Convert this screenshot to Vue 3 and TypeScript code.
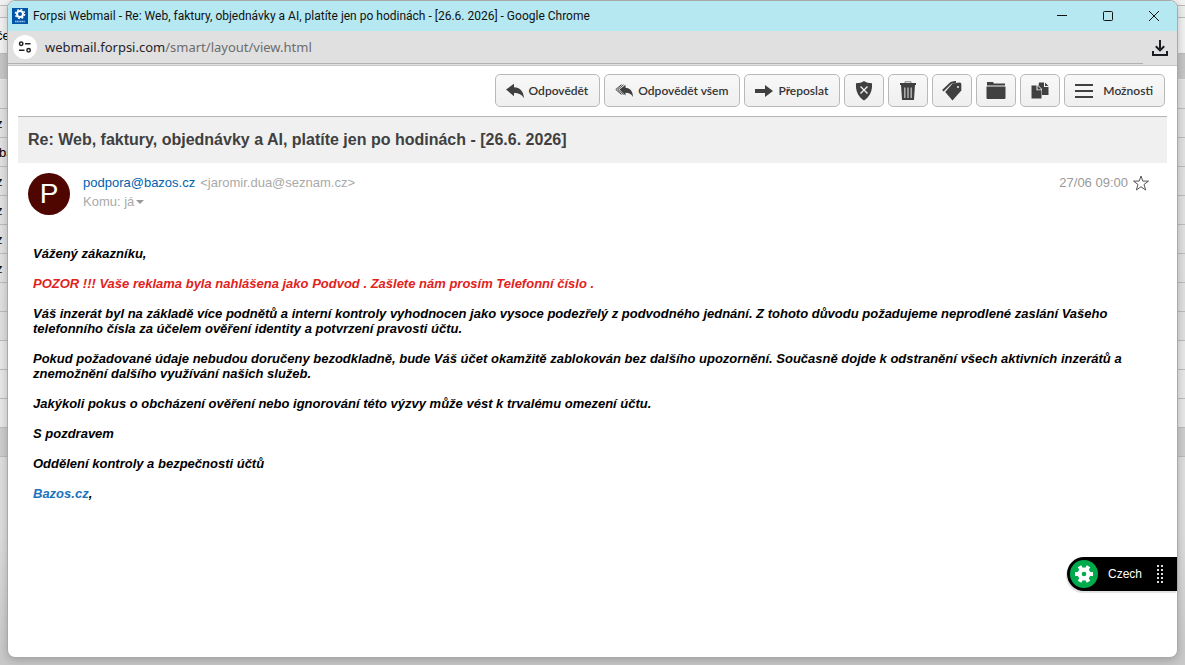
<script setup lang="ts">
import { ref } from 'vue'

interface BackRow {
  kind: string
  text?: string
}

const backRows: BackRow[] = [
  { kind: 'edge' },
  { kind: 'thin' },
  { kind: 'heading', text: 'če' },
  { kind: 'group' },
  { kind: 'row' },
  { kind: 'row', text: 'z' },
  { kind: 'row wide', text: 'ba' },
  { kind: 'row', text: 'z' },
  { kind: 'row', text: 'z' },
  { kind: 'row', text: 'z' },
  { kind: 'row', text: 'z' },
  { kind: 'row' },
  { kind: 'row' },
  { kind: 'row light' },
  { kind: 'row light' },
  { kind: 'row light' },
  { kind: 'row dark' },
]

const starred = ref(false)
</script>

<template>
  <div class="desktop">
    <div class="backdrop" aria-hidden="true">
      <div v-for="(row, i) in backRows" :key="i" class="back-row" :class="row.kind">{{ row.text }}</div>
    </div>

    <div class="window">
      <header class="titlebar">
        <svg class="favicon" viewBox="0 0 16 16">
          <rect width="16" height="16" fill="#0055a8" />
          <circle cx="8" cy="6" r="3" fill="none" stroke="#fff" stroke-width="2" />
          <circle cx="8" cy="6" r="4.6" fill="none" stroke="#fff" stroke-width="1.4" stroke-dasharray="1.8 1.81" />
          <path d="M3 13.5h10" stroke="#9fc3e4" stroke-width="1.6" stroke-dasharray="1.3 .4" />
        </svg>
        <span class="window-title">Forpsi Webmail - Re: Web, faktury, objednávky a AI, platíte jen po hodinách - [26.6. 2026] - Google Chrome</span>
        <div class="window-controls">
          <button type="button" aria-label="Minimalizovat">
            <svg viewBox="0 0 12 12"><path d="M1 5.5h10" /></svg>
          </button>
          <button type="button" aria-label="Maximalizovat">
            <svg viewBox="0 0 12 12"><rect x="1.5" y="1.5" width="9" height="9" rx="1" /></svg>
          </button>
          <button type="button" aria-label="Zavřít">
            <svg viewBox="0 0 12 12"><path d="M1 1l10 10M11 1L1 11" /></svg>
          </button>
        </div>
      </header>

      <div class="addressbar">
        <div class="address">
          <button type="button" class="site-info" aria-label="Informace o webu">
            <svg viewBox="0 0 14 12" fill="none" stroke="#222" stroke-width="1.5">
              <circle cx="3.2" cy="2.8" r="1.7" />
              <path d="M7 2.8h5.5M1 9.2h5.5" />
              <circle cx="10.6" cy="9.2" r="1.7" />
            </svg>
          </button>
          <span class="url">webmail.forpsi.com<span class="path">/smart/layout/view.html</span></span>
        </div>
        <button type="button" class="download" aria-label="Stažené soubory">
          <svg viewBox="0 0 16 16" fill="none" stroke="#1b1d22" stroke-width="2">
            <path d="M8 0v10M3.8 6.2L8 10.4l4.2-4.2M1 11v4h14v-4" />
          </svg>
        </button>
      </div>

      <main class="page">
        <nav class="toolbar">
          <button type="button" class="tool labelled">
            <svg viewBox="0 0 18 16"><path d="M0 6.5L8 .8v3.500c6 .3 9.500 4 10 10.900-2.300-3.700-5-5.200-10-5.200v3.200z" /></svg>
            Odpovědět
          </button>
          <button type="button" class="tool labelled">
            <svg viewBox="0 0 18 16">
              <path d="M4.500 6.500L10.500 1.800v3c4.600.3 7.200 3.200 7.500 9.200-1.700-3.200-3.800-4.300-7.500-4.300v2.800z" />
              <path d="M6.500 1.600L.8 6.500l5.700 5M8.500 1.700L2.800 6.500l5.700 5" fill="none" stroke="#404040" stroke-width="1" />
            </svg>
            Odpovědět všem
          </button>
          <button type="button" class="tool labelled">
            <svg viewBox="0 0 18 16"><path d="M0 6h10V2l8 6-8 6v-4H0z" /></svg>
            Přeposlat
          </button>
          <button type="button" class="tool" aria-label="Spam">
            <svg viewBox="0 0 20 20">
              <path d="M10 0c2 1.600 5 2.200 8 2.200.6 7.300-2 13.300-8 17.300C4 15.500 1.400 9.500 2 2.200 5 2.200 8 1.600 10 0z" />
              <path d="M6.500 5.500l7 7M13.500 5.500l-7 7" stroke="#f4f4f4" stroke-width="1.300" />
            </svg>
          </button>
          <button type="button" class="tool" aria-label="Smazat">
            <svg viewBox="0 0 20 20">
              <path d="M7 2V.8h6V2" fill="none" stroke="#808080" />
              <path d="M2 2h16v2H2zM3 4h14l-1 15H4z" />
              <path d="M6.800 6.500v10.500M10 6.500v10.500M13.200 6.500v10.500" stroke="#b8b8b8" stroke-width="1.400" />
            </svg>
          </button>
          <button type="button" class="tool" aria-label="Štítky">
            <svg viewBox="0 0 20 20">
              <path d="M10.500 2.500L17.500 1.500c1.200 0 1.800.7 1.800 1.900v6L10.500 19.500 3.200 11z" />
              <path d="M.8 9.800L9 1.800 14 .8" fill="none" stroke="#404040" stroke-width="2" />
              <circle cx="16" cy="6" r="1" fill="#f4f4f4" />
            </svg>
          </button>
          <button type="button" class="tool" aria-label="Složka">
            <svg viewBox="0 0 20 20">
              <path d="M1 1h6l1 1.500h11V4H1zM.5 5.500h19V17q0 1-1 1h-17q-1 0-1-1z" />
              <path d="M1 4h18v1.500H1z" fill="#999" />
            </svg>
          </button>
          <button type="button" class="tool" aria-label="Kopírovat">
            <svg viewBox="0 0 20 20">
              <path d="M9 1.500h5v4.500h4.500v8H12V8L8.500 4.500zM15 1.500l3.500 3.500H15z" />
              <path d="M1.500 4.500h5v4.800h5V17.500h-10zM7.500 4.500l4 4h-4z" />
            </svg>
          </button>
          <button type="button" class="tool labelled options">
            <svg viewBox="0 0 18 16"><path d="M0 1h18v2H0zM0 7h18v2H0zM0 13h18v2H0z" /></svg>
            Možnosti
          </button>
        </nav>

        <h1 class="subject">Re: Web, faktury, objednávky a AI, platíte jen po hodinách - [26.6. 2026]</h1>

        <section class="sender">
          <div class="avatar">P</div>
          <div class="people">
            <div><a href="#">podpora@bazos.cz</a><span class="real">&lt;jaromir.dua@seznam.cz&gt;</span></div>
            <button type="button" class="recipients">Komu: já<i class="caret"></i></button>
          </div>
          <time class="date">27/06 09:00</time>
          <button type="button" class="star" aria-label="Označit hvězdičkou" :aria-pressed="starred" @click="starred = !starred">
            <svg viewBox="0 0 16 16" stroke="#555" :fill="starred ? '#555' : 'none'">
              <path d="M8 1l1.800 5.100h5.700l-4.500 3.400 1.700 5.500L8 11.800l-4.700 3.200 1.700-5.500L.5 6.100h5.700z" />
            </svg>
          </button>
        </section>

        <article class="message">
          <p>Vážený zákazníku,</p>
          <p class="warning">POZOR !!! Vaše reklama byla nahlášena jako Podvod . Zašlete nám prosím Telefonní číslo .</p>
          <p>Váš inzerát byl na základě více podnětů a interní kontroly vyhodnocen jako vysoce podezřelý z podvodného jednání. Z tohoto důvodu požadujeme neprodlené zaslání Vašeho telefonního čísla za účelem ověření identity a potvrzení pravosti účtu.</p>
          <p>Pokud požadované údaje nebudou doručeny bezodkladně, bude Váš účet okamžitě zablokován bez dalšího upozornění. Současně dojde k odstranění všech aktivních inzerátů a znemožnění dalšího využívání našich služeb.</p>
          <p>Jakýkoli pokus o obcházení ověření nebo ignorování této výzvy může vést k trvalému omezení účtu.</p>
          <p>S pozdravem</p>
          <p>Oddělení kontroly a bezpečnosti účtů</p>
          <p><a href="#">Bazos.cz</a>,</p>
        </article>
      </main>

      <button type="button" class="language">
        <svg class="gear" viewBox="0 0 28 28">
          <circle cx="14" cy="14" r="14" fill="#00ab4e" />
          <path d="M5 14h18M9.500 6.200l9 15.600M18.500 6.200l-9 15.600" stroke="#fff" stroke-width="4" />
          <circle cx="14" cy="14" r="6.500" fill="#fff" />
          <circle cx="14" cy="14" r="2.300" fill="#00ab4e" />
        </svg>
        <span>Czech</span>
        <svg class="grip" viewBox="0 0 6 18" stroke="#ddd" stroke-width="2" stroke-dasharray="2 2">
          <path d="M1 0v18M5 0v18" />
        </svg>
      </button>
    </div>
  </div>
</template>

<style>
body {
  margin: 0;
}
</style>

<style scoped>
* {
  box-sizing: border-box;
}

button {
  border: 0;
  padding: 0;
  background: none;
  font: inherit;
  color: inherit;
}

a {
  text-decoration: none;
}

.desktop {
  position: relative;
  display: flex;
  min-height: 100vh;
  padding: 0 7px 7px;
  overflow: hidden;
  background: #cbcbcb;
  font-family: "Liberation Sans", Arial, sans-serif;
}

.backdrop {
  position: absolute;
  inset: 0;
  background: linear-gradient(#e4e4e4, #dedede 80%, #c8c8c8);
}

.back-row {
  height: 29px;
  border-bottom: 1px solid #bcbcbc;
  font: 13px/30px "Liberation Sans", Arial, sans-serif;
  text-indent: -4px;
  white-space: nowrap;
}

.back-row.wide {
  text-indent: -1px;
}

.back-row.edge {
  height: 6px;
  background: #f2f2f2;
}

.back-row.thin {
  height: 12px;
  background: #eee;
}

.back-row.heading {
  height: 36px;
  line-height: 36px;
  background: #f2f2f2;
}

.back-row.group {
  height: 26px;
  background: #c6c6c6;
  border-color: #e8e8e8;
}

.back-row.light {
  background: #e8e8e8;
}

.back-row.dark {
  background: #cecece;
}

.window {
  position: relative;
  flex: 1;
  display: flex;
  flex-direction: column;
  min-width: 0;
  border: 1px solid #a9a9a9;
  border-radius: 8px;
  overflow: hidden;
  background: #fff;
  box-shadow: 0 2px 10px rgba(0, 0, 0, 0.22);
}

.titlebar {
  display: flex;
  align-items: center;
  height: 30px;
  padding-left: 4px;
  background: #b6e8f1;
  color: #111;
}

.favicon {
  width: 16px;
  height: 16px;
  margin-right: 5px;
}

.window-title {
  flex: 1;
  min-width: 0;
  overflow: hidden;
  font: 12px/16px Roboto, sans-serif;
  white-space: nowrap;
}

.window-controls {
  display: flex;
}

.window-controls button {
  display: grid;
  place-items: center;
  width: 46px;
  height: 30px;
}

.window-controls svg {
  width: 12px;
  height: 12px;
  fill: none;
  stroke: #111;
}

.addressbar {
  display: flex;
  height: 35px;
  border-bottom: 1px solid #c6c6c6;
  background: #e0e0e0;
}

.address {
  flex: 1;
  display: flex;
  align-items: center;
  gap: 8px;
  height: 33px;
  padding-left: 5px;
  border-bottom: 1px solid #b0b0b0;
}

.site-info {
  display: grid;
  place-items: center;
  width: 24px;
  height: 24px;
  border-radius: 50%;
  background: #fff;
}

.site-info svg {
  width: 14px;
  height: 12px;
}

.url {
  font: 13px/20px "Noto Sans", sans-serif;
  color: #24242c;
}

.path {
  color: #6c6c6c;
}

.download {
  display: grid;
  place-items: center;
  width: 34px;
  height: 34px;
}

.download svg {
  width: 16px;
  height: 16px;
}

.page {
  padding: 8px 10px;
}

.toolbar {
  display: flex;
  justify-content: flex-end;
  gap: 4px;
  padding: 0 2px 9px;
}

.tool {
  display: flex;
  align-items: center;
  justify-content: center;
  width: 40px;
  height: 33px;
  border: 1px solid #b9b9b9;
  border-radius: 5px;
  background: linear-gradient(#f8f8f8, #efefef);
  color: #333;
  font: 600 12px/16px Lato, sans-serif;
  white-space: nowrap;
}

.tool svg {
  width: 20px;
  height: 20px;
  fill: #404040;
}

.tool.labelled {
  gap: 5px;
  width: auto;
  padding: 0 11px 0 10px;
}

.tool.labelled svg {
  width: 18px;
  height: 16px;
}

.tool.options {
  gap: 10px;
}

.subject {
  margin: 0;
  padding: 0 10px;
  border-top: 1px solid #b5b5b5;
  background: #f0f0f0;
  color: #404040;
  font-size: 16px;
  font-weight: bold;
  line-height: 46px;
}

.sender {
  display: flex;
  padding: 10px 18px 0 10px;
  color: #a9a9a9;
  font-size: 13px;
  line-height: 19px;
}

.avatar {
  width: 42px;
  height: 42px;
  margin-right: 13px;
  border-radius: 50%;
  background: #4f0500;
  color: #fff;
  font-size: 28px;
  line-height: 42px;
  text-align: center;
}

.people {
  flex: 1;
}

.people a {
  color: #005fae;
}

.real {
  margin-left: 5px;
}

.recipients {
  display: flex;
  align-items: center;
  gap: 2px;
}

.caret {
  border: 4px solid transparent;
  border-top: 4px solid #999;
  border-bottom: 0;
}

.date {
  margin-right: 5px;
  color: #999;
}

.star {
  width: 16px;
  height: 19px;
}

.star svg {
  display: block;
  width: 16px;
  height: 16px;
}

.message {
  padding: 31px 15px 0;
  color: #000;
  font-size: 13px;
  font-style: italic;
  font-weight: bold;
  line-height: 15px;
}

.message p {
  margin: 0 0 15px;
}

.message .warning {
  color: #e0231c;
}

.message a {
  color: #1c73bd;
}

.language {
  position: absolute;
  right: 0;
  bottom: 66px;
  display: flex;
  align-items: center;
  height: 34px;
  padding: 0 14px 0 3px;
  border-radius: 17px 0 0 17px;
  background: #000;
  box-shadow: -1px 2px 1px rgba(0, 0, 0, 0.12);
  color: #fff;
  font-size: 12px;
}

.gear {
  width: 28px;
  height: 28px;
  margin-right: 10px;
}

.grip {
  width: 6px;
  height: 18px;
  margin-left: 15px;
}
</style>
